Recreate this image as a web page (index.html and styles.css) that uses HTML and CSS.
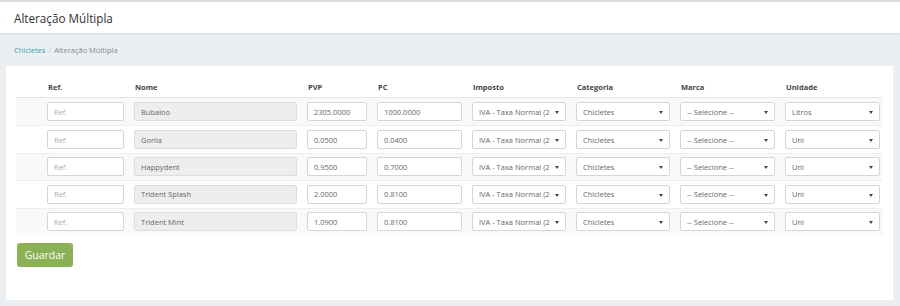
FILE: index.html
```html
<!DOCTYPE html>
<html lang="pt">
<head>
<meta charset="utf-8">
<title>Alteração Múltipla</title>
<link rel="stylesheet" href="styles.css">
</head>
<body>
<header class="page-header">
  <h1 class="page-title">Alteração Múltipla</h1>
</header>
<nav class="breadcrumb">
  <a class="crumb-link" href="#">Chicletes</a>
  <span class="crumb-sep">/</span>
  <span class="crumb-current">Alteração Múltipla</span>
</nav>
<main class="card">
  <div class="grid-table">
    <div class="grid-row head-row">
      <div class="th">Ref.</div>
      <div class="th">Nome</div>
      <div class="th">PVP</div>
      <div class="th">PC</div>
      <div class="th">Imposto</div>
      <div class="th">Categoria</div>
      <div class="th">Marca</div>
      <div class="th">Unidade</div>
    </div>

    <div class="grid-row body-row striped">
      <input class="field" placeholder="Ref.">
      <input class="field disabled" value="Bubaloo" disabled>
      <input class="field" value="2305.0000">
      <input class="field" value="1000.0000">
      <div class="sel"><span class="sel-text">IVA - Taxa Normal (2</span></div>
      <div class="sel"><span class="sel-text">Chicletes</span></div>
      <div class="sel"><span class="sel-text">-- Selecione --</span></div>
      <div class="sel"><span class="sel-text">Litros</span></div>
    </div>

    <div class="grid-row body-row">
      <input class="field" placeholder="Ref.">
      <input class="field disabled" value="Gorila" disabled>
      <input class="field" value="0.0500">
      <input class="field" value="0.0400">
      <div class="sel"><span class="sel-text">IVA - Taxa Normal (2</span></div>
      <div class="sel"><span class="sel-text">Chicletes</span></div>
      <div class="sel"><span class="sel-text">-- Selecione --</span></div>
      <div class="sel"><span class="sel-text">Uni</span></div>
    </div>

    <div class="grid-row body-row striped">
      <input class="field" placeholder="Ref.">
      <input class="field disabled" value="Happydent" disabled>
      <input class="field" value="0.9500">
      <input class="field" value="0.7000">
      <div class="sel"><span class="sel-text">IVA - Taxa Normal (2</span></div>
      <div class="sel"><span class="sel-text">Chicletes</span></div>
      <div class="sel"><span class="sel-text">-- Selecione --</span></div>
      <div class="sel"><span class="sel-text">Uni</span></div>
    </div>

    <div class="grid-row body-row">
      <input class="field" placeholder="Ref.">
      <input class="field disabled" value="Trident Splash" disabled>
      <input class="field" value="2.0000">
      <input class="field" value="0.8100">
      <div class="sel"><span class="sel-text">IVA - Taxa Normal (2</span></div>
      <div class="sel"><span class="sel-text">Chicletes</span></div>
      <div class="sel"><span class="sel-text">-- Selecione --</span></div>
      <div class="sel"><span class="sel-text">Uni</span></div>
    </div>

    <div class="grid-row body-row striped">
      <input class="field" placeholder="Ref.">
      <input class="field disabled" value="Trident Mint" disabled>
      <input class="field" value="1.0900">
      <input class="field" value="0.8100">
      <div class="sel"><span class="sel-text">IVA - Taxa Normal (2</span></div>
      <div class="sel"><span class="sel-text">Chicletes</span></div>
      <div class="sel"><span class="sel-text">-- Selecione --</span></div>
      <div class="sel"><span class="sel-text">Uni</span></div>
    </div>
  </div>
  <button class="btn-save" type="button">Guardar</button>
</main>
</body>
</html>
```

FILE: styles.css
```css
* { box-sizing: border-box; }

html, body {
  margin: 0;
  padding: 0;
}

body {
  background: #ebeff2;
  font-family: "Open Sans", "Noto Sans", sans-serif;
  color: #555;
  border-top: 2px solid #d8dcdf;
  height: 306px;
  overflow: hidden;
}

.page-header {
  background: #fff;
  height: 31px;
  display: flex;
  align-items: center;
  padding-left: 14px;
  box-shadow: 0 1px 2px rgba(0,0,0,0.08);
}

.page-title {
  margin: 0;
  font-size: 11.7px;
  font-weight: 400;
  color: #333;
}

.breadcrumb {
  display: flex;
  align-items: center;
  gap: 3px;
  padding: 0 14px 0;
  height: 33px;
  font-size: 7.5px;
}

.crumb-link {
  color: #3a9cb0;
  text-decoration: none;
}

.crumb-sep { color: #ccc; }
.crumb-current { color: #888; }

.card {
  background: #fff;
  margin: 0 7px 0 6px;
  height: 234px;
  padding: 11px 10px 0;
}

.grid-row {
  display: grid;
  grid-template-columns: 77px 163px 60px 85px 94px 94px 95px 95px;
  column-gap: 10px;
  padding-left: 31px;
  padding-right: 5px;
}

.head-row {
  height: 21px;
  align-items: center;
  border-bottom: 1px solid #e3e3e3;
}

.th {
  font-size: 7.5px;
  font-weight: 700;
  color: #444;
  padding-left: 1px;
}

.body-row {
  height: 27.4px;
  align-items: center;
  border-top: 1px solid #eee;
}

.head-row + .body-row { border-top: none; }

.striped { background: #f9f9f9; }

.field {
  height: 19px;
  width: 100%;
  border: 1px solid #d5d5d5;
  border-radius: 2px;
  background: #fff;
  padding: 0 6px;
  font-family: "Open Sans", "Noto Sans", sans-serif;
  font-size: 7.5px;
  color: #666;
  outline: none;
  margin: 0;
}

.field::placeholder { color: #aaa; }

.field.disabled {
  background: #eee;
  color: #666;
  border-color: #ddd;
}

.sel {
  position: relative;
  height: 19px;
  border: 1px solid #d5d5d5;
  border-radius: 2px;
  background: #fff;
  display: flex;
  align-items: center;
  padding: 0 14px 0 6px;
  font-size: 7.5px;
  color: #666;
  overflow: hidden;
}

.sel-text {
  white-space: nowrap;
  overflow: hidden;
}

.sel::after {
  content: "";
  position: absolute;
  right: 6px;
  top: 8px;
  border-left: 2px solid transparent;
  border-right: 2px solid transparent;
  border-top: 3px solid #444;
}

.btn-save {
  margin-top: 8px;
  margin-left: 1px;
  width: 56px;
  height: 24px;
  border: none;
  border-radius: 3px;
  background: #8bb055;
  color: #fff;
  font-family: "Open Sans", "Noto Sans", sans-serif;
  font-size: 10.5px;
  padding: 0;
  cursor: pointer;
}
```
